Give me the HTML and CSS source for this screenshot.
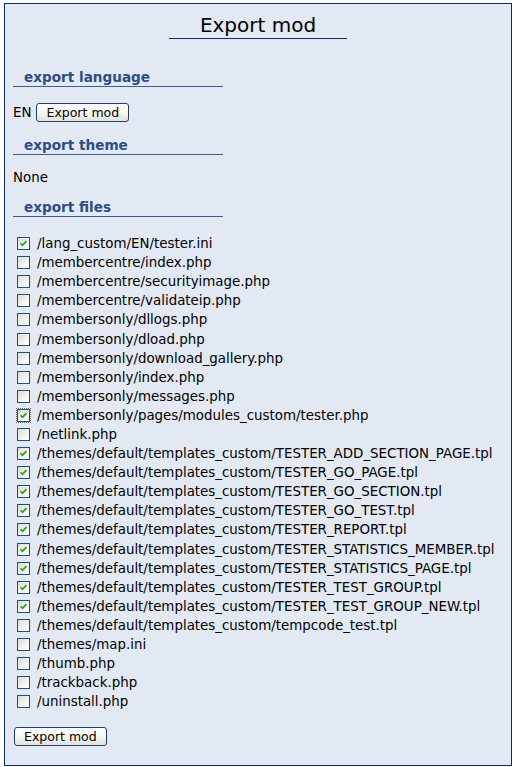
FILE: index.html
```html
<!DOCTYPE html>
<html>
<head>
<meta charset="utf-8">
<link rel="stylesheet" href="styles.css">
</head>
<body>
<div class="panel">
  <div class="title-wrap"><h1 class="title">Export mod</h1></div>

  <h2 class="sect first">export language</h2>
  <div class="lang-row"><span>EN</span><button class="btn">Export mod</button></div>

  <h2 class="sect">export theme</h2>
  <p class="none">None</p>

  <h2 class="sect">export files</h2>
  <ul class="files">
    <li class="on"><span class="cb"><svg viewBox="0 0 13 13"><path d="M3 6.2 L5.3 8.6 L10 3.6" /></svg></span>/lang_custom/EN/tester.ini</li>
    <li><span class="cb"></span>/membercentre/index.php</li>
    <li><span class="cb"></span>/membercentre/securityimage.php</li>
    <li><span class="cb"></span>/membercentre/validateip.php</li>
    <li><span class="cb"></span>/membersonly/dllogs.php</li>
    <li><span class="cb"></span>/membersonly/dload.php</li>
    <li><span class="cb"></span>/membersonly/download_gallery.php</li>
    <li><span class="cb"></span>/membersonly/index.php</li>
    <li><span class="cb"></span>/membersonly/messages.php</li>
    <li class="on focus"><span class="cb"><svg viewBox="0 0 13 13"><path d="M3 6.2 L5.3 8.6 L10 3.6" /></svg></span>/membersonly/pages/modules_custom/tester.php</li>
    <li><span class="cb"></span>/netlink.php</li>
    <li class="on"><span class="cb"><svg viewBox="0 0 13 13"><path d="M3 6.2 L5.3 8.6 L10 3.6" /></svg></span>/themes/default/templates_custom/TESTER_ADD_SECTION_PAGE.tpl</li>
    <li class="on"><span class="cb"><svg viewBox="0 0 13 13"><path d="M3 6.2 L5.3 8.6 L10 3.6" /></svg></span>/themes/default/templates_custom/TESTER_GO_PAGE.tpl</li>
    <li class="on"><span class="cb"><svg viewBox="0 0 13 13"><path d="M3 6.2 L5.3 8.6 L10 3.6" /></svg></span>/themes/default/templates_custom/TESTER_GO_SECTION.tpl</li>
    <li class="on"><span class="cb"><svg viewBox="0 0 13 13"><path d="M3 6.2 L5.3 8.6 L10 3.6" /></svg></span>/themes/default/templates_custom/TESTER_GO_TEST.tpl</li>
    <li class="on"><span class="cb"><svg viewBox="0 0 13 13"><path d="M3 6.2 L5.3 8.6 L10 3.6" /></svg></span>/themes/default/templates_custom/TESTER_REPORT.tpl</li>
    <li class="on"><span class="cb"><svg viewBox="0 0 13 13"><path d="M3 6.2 L5.3 8.6 L10 3.6" /></svg></span>/themes/default/templates_custom/TESTER_STATISTICS_MEMBER.tpl</li>
    <li class="on"><span class="cb"><svg viewBox="0 0 13 13"><path d="M3 6.2 L5.3 8.6 L10 3.6" /></svg></span>/themes/default/templates_custom/TESTER_STATISTICS_PAGE.tpl</li>
    <li class="on"><span class="cb"><svg viewBox="0 0 13 13"><path d="M3 6.2 L5.3 8.6 L10 3.6" /></svg></span>/themes/default/templates_custom/TESTER_TEST_GROUP.tpl</li>
    <li class="on"><span class="cb"><svg viewBox="0 0 13 13"><path d="M3 6.2 L5.3 8.6 L10 3.6" /></svg></span>/themes/default/templates_custom/TESTER_TEST_GROUP_NEW.tpl</li>
    <li><span class="cb"></span>/themes/default/templates_custom/tempcode_test.tpl</li>
    <li><span class="cb"></span>/themes/map.ini</li>
    <li><span class="cb"></span>/thumb.php</li>
    <li><span class="cb"></span>/trackback.php</li>
    <li><span class="cb"></span>/uninstall.php</li>
  </ul>
  <div class="foot"><button class="btn">Export mod</button></div>
</div>
</body>
</html>
```
FILE: styles.css
```css
html, body {
  margin: 0;
  padding: 0;
  background: #ffffff;
}
body {
  font-family: "DejaVu Sans", Verdana, sans-serif;
  font-size: 13.4px;
  color: #000;
}
.panel {
  margin: 3px 0 0 4px;
  width: 506px;
  height: 761px;
  border: 1px solid #0d2a63;
  background: #e2e9f2;
  box-sizing: content-box;
}
.title-wrap {
  display: flex;
  justify-content: center;
  padding-top: 8px;
}
.title {
  margin: 0;
  width: 178px;
  text-align: center;
  font-size: 20px;
  font-weight: normal;
  line-height: 26px;
  border-bottom: 1px solid #0f2d6b;
  padding-bottom: 0;
}
.sect {
  margin: 0 0 0 8px;
  width: 199px;
  padding-left: 11px;
  font-size: 13.6px;
  font-weight: bold;
  color: #2e4d85;
  line-height: 17px;
  border-bottom: 1px solid #3a5e94;
}
.sect.first {
  margin-top: 30px;
}
.lang-row {
  display: flex;
  align-items: center;
  gap: 5px;
  margin: 15px 0 0 8px;
  height: 20px;
}
.btn {
  font-family: "DejaVu Sans", Verdana, sans-serif;
  font-size: 12.5px;
  color: #000;
  height: 19px;
  padding: 0 9px;
  border: 1px solid #1d3f73;
  border-radius: 3px;
  background: linear-gradient(#ffffff 0%, #f7f6f1 50%, #e3e1d8 100%);
  line-height: 17px;
}
.lang-row + .sect {
  margin-top: 15px;
}
.none {
  margin: 15px 0 0 8px;
  line-height: 16px;
}
.none + .sect {
  margin-top: 13px;
}
.files {
  list-style: none;
  margin: 17px 0 0 12px;
  padding: 0;
}
.files li {
  display: flex;
  align-items: center;
  height: 19.1px;
  white-space: nowrap;
}
.cb {
  width: 11px;
  height: 11px;
  border: 1px solid #1c5180;
  background: linear-gradient(135deg, #dcdbd3 0%, #f4f4f0 60%, #ffffff 100%);
  margin-right: 7px;
  flex: none;
  display: flex;
}
.cb svg {
  width: 11px;
  height: 11px;
}
.cb path {
  fill: none;
  stroke: #21a121;
  stroke-width: 2;
}
.focus .cb {
  outline: 1px dotted #666;
  outline-offset: 0px;
}
.foot {
  margin: 16px 0 0 9px;
}
```
